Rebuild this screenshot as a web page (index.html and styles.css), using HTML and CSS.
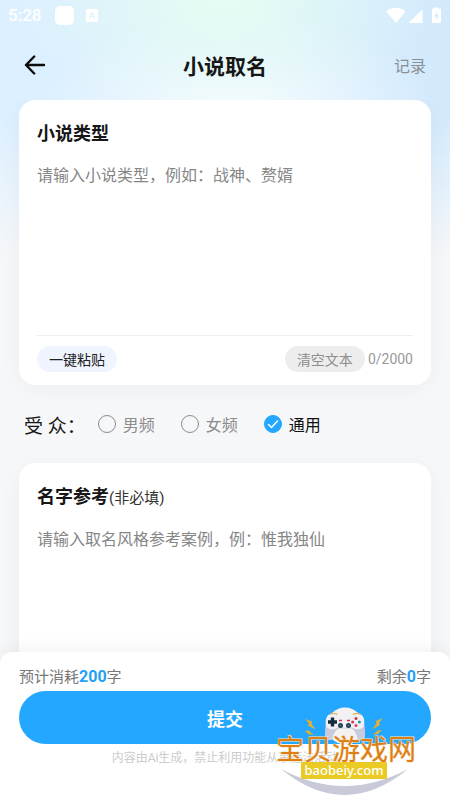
FILE: index.html
```html
<!DOCTYPE html>
<html lang="zh-CN">
<head>
<meta charset="utf-8">
<meta name="viewport" content="width=device-width, initial-scale=1">
<title>小说取名</title>
<link rel="stylesheet" href="styles.css">
</head>
<body>
<div class="app">
  <div class="status">
    <div class="status-group status-left">
      <span class="clock">5:28</span>
      <span class="status-square"></span>
      <svg class="status-app" width="12" height="13" viewBox="0 0 12 13" aria-hidden="true">
        <path fill="#fff" fill-rule="evenodd" d="M1 0h10a1 1 0 0 1 1 1v11a1 1 0 0 1-1 1H1a1 1 0 0 1-1-1V1a1 1 0 0 1 1-1ZM5 3.500 2.800 9.500h1.300l.5-1.300h2.700l.5 1.300h1.300L6.900 3.500ZM6 4.900l.9 2.300H5.100Z"/>
      </svg>
    </div>
    <svg width="56" height="17" viewBox="0 0 56 17" fill="#fff" aria-hidden="true">
      <path d="M0 4.500C5-.4 14.500-.4 19.500 4.500L10 16Z"/>
      <path d="M36.500 2.500V16H22.500Z"/>
      <path fill-rule="evenodd" d="M48.500 1.500V.5h4v1h1.500a1 1 0 0 1 1 1V15a1 1 0 0 1-1 1h-7a1 1 0 0 1-1-1V2.500a1 1 0 0 1 1-1ZM51.500 4.500 48 9.500h2.200v4L53 8.200h-2.200Z"/>
    </svg>
  </div>

  <header class="header">
    <button class="back" type="button" aria-label="返回">
      <svg width="22" height="20" viewBox="0 0 22 20" fill="none" stroke="#0c0c0c" stroke-width="2.400" stroke-linecap="round" stroke-linejoin="round" aria-hidden="true">
        <path d="M20 10H2M10.200 1.500 2 10l8.200 8.500"/>
      </svg>
    </button>
    <h1 class="title">小说取名</h1>
    <a class="history" href="#history">记录</a>
  </header>

  <main class="content">
    <section class="card">
      <label class="card-title" for="genre">小说类型</label>
      <textarea class="field" id="genre" maxlength="2000" placeholder="请输入小说类型，例如：战神、赘婿"></textarea>
      <div class="toolbar">
        <button class="pill pill-paste" type="button">一键粘贴</button>
        <div class="toolbar-end">
          <button class="pill pill-clear" type="button">清空文本</button>
          <span class="counter">0/2000</span>
        </div>
      </div>
    </section>

    <div class="audience" role="radiogroup" aria-labelledby="audience-label">
      <span class="audience-label" id="audience-label">受 众：</span>
      <div class="options">
        <label class="option"><input class="radio" type="radio" name="audience"><span>男频</span></label>
        <label class="option"><input class="radio" type="radio" name="audience"><span>女频</span></label>
        <label class="option"><input class="radio" type="radio" name="audience" checked><span>通用</span>
          <svg class="tick" width="18" height="18" viewBox="0 0 18 18" fill="none" stroke="#fff" stroke-width="1.500" stroke-linecap="round" stroke-linejoin="round" aria-hidden="true"><path d="m4.500 9.500 3 3 6-6.500"/></svg>
        </label>
      </div>
    </div>

    <section class="card">
      <label class="card-title" for="sample">名字参考<span class="optional">(非必填)</span></label>
      <textarea class="field" id="sample" placeholder="请输入取名风格参考案例，例：惟我独仙"></textarea>
    </section>
  </main>

  <footer class="footer">
    <div class="usage">
      <span>预计消耗<b class="amount">200</b>字</span>
      <span>剩余<b class="amount">0</b>字</span>
    </div>
    <button class="submit" type="button">提交</button>
    <p class="notice">内容由Ai生成，禁止利用功能从事违法活动</p>

    <svg class="brand" width="140" height="92" viewBox="0 0 140 92" aria-hidden="true">
      <path d="M5 63Q68.500 115 132 63Q68.500 97 5 63Z" fill="#c9cad8"/>
      <circle cx="69" cy="20" r="18.500" fill="#f3f2f0"/>
      <path d="M50 17c-1 5-1.500 11-.5 17h6.500c1-5 3-9.500 6.500-11.500h13c3.500 2 5.500 6.500 6.500 11.500h6.500c1-6 .5-12-.5-17Z" fill="#c9cbdc"/>
      <path d="M50.500 21c-1.500-5-1-10 2.500-12.500 3-1 6-.8 8.500 1h15c2.500-1.800 5.500-2 8.500-1 3.500 2.500 4 7.500 2.500 12.500-3 3-8 3-10.500.8H61c-2.500 2.200-7.500 2.200-10.500-.8Z" fill="#f0f0f5"/>
      <path d="M54.500 8q3-1.500 7 .5M77 8.500q4-2 7-.5" fill="none" stroke="#e8b65a" stroke-width="1.400"/>
      <path d="M54.800 11.500h3.400v2.800H61v3.400h-2.800v2.800h-3.400v-2.800H52v-3.400h2.800Z" fill="#142c3b"/>
      <circle cx="64.500" cy="19.500" r="2.500" fill="#1f3d50"/><circle cx="72.500" cy="19.500" r="2.500" fill="#1f3d50"/>
      <circle cx="64.500" cy="19.500" r=".8" fill="#6d8999"/><circle cx="72.500" cy="19.500" r=".8" fill="#6d8999"/>
      <path d="M63 14.500h3M71 14.500h3" stroke="#d9304d" stroke-width="1.500"/>
      <circle cx="80" cy="12.500" r="1.500" fill="#ce3250"/><circle cx="76.600" cy="16" r="1.500" fill="#dd374f"/>
      <circle cx="83.400" cy="16" r="1.500" fill="#2894a1"/><circle cx="80" cy="19.500" r="1.500" fill="#e43e50"/>
      <g fill="#edae2c">
        <path d="M29.500 13 36 15.500 35.500 18 39.500 23.500 32 19.500 33 17.500Z"/>
        <path d="M106.500 12 100 15 100.500 17.500 96.500 23 104 19 103 17Z"/>
        <path d="M28.500 25 33.500 24.500 34 26 38 28.500 32 28.200 31.500 26.800ZM106 24.500 101 24.500 100.500 26 96.500 28.500 102.500 28 103 26.500Z"/>
      </g>
      <text class="brand-name" x="70" y="54" text-anchor="middle">宝贝游戏网</text>
      <rect x="25" y="56" width="86" height="17" fill="#eacb25"/>
      <text class="brand-url" x="68" y="69" text-anchor="middle">baobeiy.com</text>
    </svg>
  </footer>
</div>
</body>
</html>
```

FILE: styles.css
```css
* {
  box-sizing: border-box;
}

body {
  margin: 0;
  font-family: Roboto, "Noto Sans CJK SC", sans-serif;
  color: #161616;
}

button,
textarea,
input {
  margin: 0;
  border: 0;
  font: inherit;
}

button {
  padding: 0;
  background: none;
  cursor: pointer;
}

.app {
  display: flex;
  flex-direction: column;
  height: 100vh;
  background:
    radial-gradient(ellipse 46% 120px at 50% 0, #e5fdf2 0%, rgba(229, 253, 242, 0) 100%) no-repeat,
    radial-gradient(ellipse 44% 100px at 52% 110px, #f8fcff 0%, rgba(246, 252, 255, 0) 100%) no-repeat,
    linear-gradient(180deg, rgba(246, 247, 249, 0) 120px, #f6f7f9 260px),
    linear-gradient(90deg, #ddf0ff, #d3eafd);
}

.status {
  display: flex;
  align-items: center;
  justify-content: space-between;
  height: 30px;
  padding: 0 8px;
}

.status-group {
  display: flex;
  align-items: center;
}

.clock {
  font-size: 17px;
  font-weight: 500;
  color: #fff;
}

.status-square {
  width: 19px;
  height: 19px;
  margin: 0 12px 0 14px;
  border-radius: 5px;
  background: #fff;
}

.header {
  display: grid;
  grid-template-columns: 1fr auto 1fr;
  align-items: center;
  height: 70px;
  padding: 0 24px;
}

.back {
  display: flex;
  justify-self: start;
}

.title {
  margin: 0;
  font-size: 21px;
  font-weight: 700;
}

.history {
  justify-self: end;
  font-size: 16px;
  color: #8a8f94;
  text-decoration: none;
}

.content {
  flex: 1;
  min-height: 0;
  padding: 0 19px;
  overflow-y: auto;
  scrollbar-width: none;
}

.card {
  padding: 21px 18px 13px;
  border-radius: 16px;
  background: #fff;
  box-shadow: 0 4px 24px rgba(0, 0, 0, 0.04);
}

.card-title {
  display: block;
  font-size: 18px;
  font-weight: 700;
  line-height: 26px;
}

.optional {
  font-size: 15px;
  font-weight: 400;
  color: #333;
}

.field {
  display: block;
  width: 100%;
  height: 172px;
  margin-top: 16px;
  padding: 0;
  outline: 0;
  resize: none;
  background: none;
  font-size: 16px;
  line-height: 26px;
}

.field::placeholder {
  color: #868686;
}

.toolbar {
  display: flex;
  align-items: center;
  justify-content: space-between;
  padding-top: 10px;
  border-top: 1px solid #eee;
}

.toolbar-end {
  display: flex;
  align-items: center;
  gap: 3px;
}

.pill {
  height: 26px;
  padding: 0 12px;
  border-radius: 13px;
  font-size: 14px;
}

.pill-paste {
  background: #eff4ff;
  color: #222;
}

.pill-clear {
  background: #ededed;
  color: #8e8e8e;
}

.counter {
  font-size: 14px;
  color: #999;
}

.audience {
  display: flex;
  align-items: center;
  gap: 12px;
  height: 78px;
  padding-left: 5px;
}

.audience-label {
  font-size: 19px;
}

.options {
  display: flex;
  gap: 26px;
}

.option {
  position: relative;
  display: flex;
  align-items: center;
  gap: 7px;
  font-size: 16px;
  color: #8c8c8c;
}

.option:has(:checked) {
  color: #111;
}

.radio {
  appearance: none;
  width: 18px;
  height: 18px;
  border: 1px solid #8c8c8c;
  border-radius: 50%;
}

.radio:checked {
  border-color: #24a7ff;
  background: #24a7ff;
}

.tick {
  position: absolute;
  left: 0;
  pointer-events: none;
}

.footer {
  position: relative;
  margin-top: -16px;
  padding: 14px 19px 34px;
  border-radius: 12px 12px 0 0;
  background: #fff;
  box-shadow: 0 -4px 16px rgba(0, 0, 0, 0.05);
}

.usage {
  display: flex;
  justify-content: space-between;
  font-size: 15px;
  line-height: 22px;
  color: #777;
}

.amount {
  font-size: 16px;
  color: #24a0f5;
}

.submit {
  display: block;
  width: 100%;
  height: 53px;
  margin-top: 3px;
  border-radius: 27px;
  background: #24a7ff;
  font-size: 18px;
  font-weight: 700;
  color: #fff;
}

.notice {
  margin: 6px 0 0;
  font-size: 12px;
  line-height: 16px;
  text-align: center;
  color: #ccc;
}

.brand {
  position: absolute;
  right: 34px;
  bottom: 2px;
  pointer-events: none;
}

.brand-name {
  font-family: "Noto Sans CJK SC", sans-serif;
  font-size: 28px;
  font-weight: 400;
  fill: #dd7f14;
  stroke: #fbe6c4;
  stroke-width: 1px;
  paint-order: stroke;
}

.brand-url {
  font-family: "Noto Sans", sans-serif;
  font-size: 13px;
  font-weight: 500;
  fill: #fff;
}
```
